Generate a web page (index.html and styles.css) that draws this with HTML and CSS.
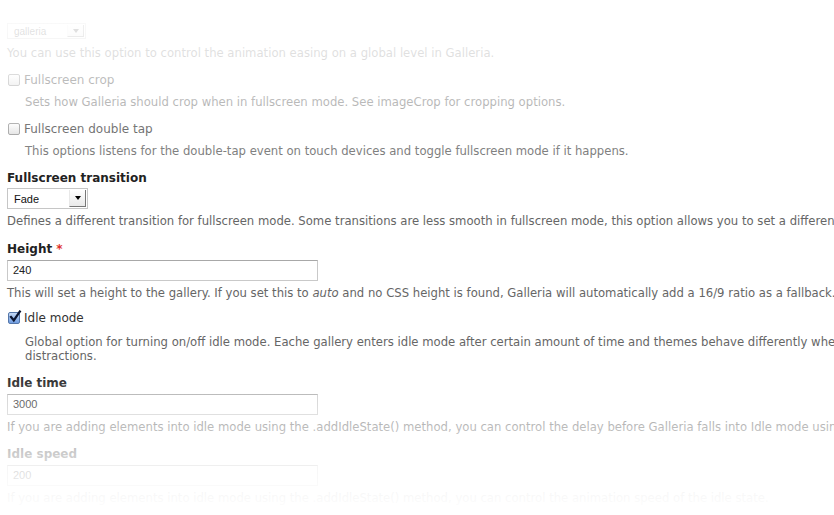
FILE: index.html
```html
<!DOCTYPE html>
<html>
<head>
<meta charset="utf-8">
<link rel="stylesheet" href="styles.css">
</head>
<body>
<div class="form">
  <div class="item item-top">
    <div class="select select-small"><span class="select-text">galleria</span><span class="select-btn"><span class="arrow"></span></span></div>
    <div class="desc desc-first">You can use this option to control the animation easing on a global level in Galleria.</div>
  </div>

  <div class="item">
    <label class="check"><span class="box"></span>Fullscreen crop</label>
    <div class="desc indent">Sets how Galleria should crop when in fullscreen mode. See imageCrop for cropping options.</div>
  </div>

  <div class="item">
    <label class="check"><span class="box"></span>Fullscreen double tap</label>
    <div class="desc indent">This options listens for the double-tap event on touch devices and toggle fullscreen mode if it happens.</div>
  </div>

  <div class="item item-transition">
    <div class="label">Fullscreen transition</div>
    <div class="select select-fade"><span class="select-text">Fade</span><span class="select-btn"><span class="arrow"></span></span></div>
    <div class="desc">Defines a different transition for fullscreen mode. Some transitions are less smooth in fullscreen mode, this option allows you to set a different transition when in fullscreen mode.</div>
  </div>

  <div class="item">
    <div class="label">Height <span class="req">*</span></div>
    <div class="input">240</div>
    <div class="desc">This will set a height to the gallery. If you set this to <em>auto</em> and no CSS height is found, Galleria will automatically add a 16/9 ratio as a fallback.</div>
  </div>

  <div class="item item-idle">
    <label class="check"><span class="box checked"><svg width="14" height="14" viewBox="0 0 14 14"><path d="M3 7 L5.8 10.4 L11.8 1.6" fill="none" stroke="#0b1530" stroke-width="2.3" stroke-linecap="square"/></svg></span>Idle mode</label>
    <div class="desc indent indent-idle">Global option for turning on/off idle mode. Eache gallery enters idle mode after certain amount of time and themes behave differently when this happens, f.ex clears the stage from<br>distractions.</div>
  </div>

  <div class="item">
    <div class="label">Idle time</div>
    <div class="input">3000</div>
    <div class="desc">If you are adding elements into idle mode using the .addIdleState() method, you can control the delay before Galleria falls into Idle mode using this option.</div>
  </div>

  <div class="item">
    <div class="label">Idle speed</div>
    <div class="input">200</div>
    <div class="desc">If you are adding elements into idle mode using the .addIdleState() method, you can control the animation speed of the idle state.</div>
  </div>
</div>
<div class="fade"></div>
</body>
</html>
```

FILE: styles.css
```css
html, body {
  margin: 0;
  padding: 0;
  background: #fff;
  overflow: hidden;
}
body {
  width: 834px;
  height: 515px;
  font-family: "DejaVu Sans", Verdana, sans-serif;
  color: #333;
  position: relative;
}
.form {
  padding: 23px 0 0 7px;
  white-space: nowrap;
}
.item {
  margin-bottom: 11px;
}
.item-transition { margin-bottom: 12px; }
.label {
  font-weight: bold;
  font-size: 12px;
  line-height: 18px;
  color: #222;
}
.req { color: #e0302a; }
.check {
  display: flex;
  align-items: center;
  font-size: 12px;
  line-height: 18px;
  color: #333;
}
.box {
  width: 12px;
  height: 12px;
  margin: 0 4px 0 1px;
  border: 1px solid #8a8a8a;
  border-radius: 2px;
  background: linear-gradient(#fcfcfc, #dcdcdc);
  box-sizing: border-box;
  position: relative;
}
.box.checked {
  border-color: #5577aa;
  background: linear-gradient(#c4d9f5, #6f9ce0);
}
.box svg {
  position: absolute;
  left: -1px;
  top: -3px;
}
.desc {
  font-size: 11.65px;
  line-height: 14px;
  color: #666;
  margin-top: 5px;
}
.desc-first { margin-top: 7px; }
.indent {
  padding-left: 18px;
  margin-top: 6px;
}
.item-idle { margin-top: -2px; }
.indent-idle { margin-top: 8px; }
.select {
  margin-top: 2px;
  width: 81px;
  height: 21px;
  box-sizing: border-box;
  border: 1px solid #c6c6c6;
  background: #fff;
  display: flex;
  font-family: "Liberation Sans", Arial, sans-serif;
  font-size: 11px;
  color: #111;
}
.select-fade { margin-top: 1px; }
.select-small {
  margin-top: 0;
  width: 79px;
  height: 16px;
  font-size: 10px;
}
.select-text {
  flex: 1;
  padding-left: 6px;
  display: flex;
  align-items: center;
}
.select-btn {
  width: 15px;
  margin: 1px 1px 1px 0;
  border-left: 1px solid #e8e8e8;
  border-right: 1px solid #777;
  border-bottom: 1px solid #777;
  background: linear-gradient(#ffffff, #e9e9e9);
  display: flex;
  align-items: center;
  justify-content: center;
}
.arrow {
  width: 0;
  height: 0;
  border-left: 3.5px solid transparent;
  border-right: 3.5px solid transparent;
  border-top: 4px solid #000;
}
.input {
  margin-top: 2px;
  width: 311px;
  height: 21px;
  box-sizing: border-box;
  border: 1px solid #c9c9c9;
  border-top-color: #a8a8a8;
  padding: 0 5px;
  font-family: "Liberation Sans", Arial, sans-serif;
  font-size: 11px;
  line-height: 19px;
  color: #222;
}
.fade {
  position: absolute;
  inset: 0;
  pointer-events: none;
  background: linear-gradient(to bottom,
    rgba(255,255,255,0.92) 0px,
    rgba(255,255,255,0.88) 30px,
    rgba(255,255,255,0.8) 53px,
    rgba(255,255,255,0.68) 79px,
    rgba(255,255,255,0.56) 101px,
    rgba(255,255,255,0.32) 128px,
    rgba(255,255,255,0.18) 150px,
    rgba(255,255,255,0) 175px,
    rgba(255,255,255,0) 365px,
    rgba(255,255,255,0.1) 382px,
    rgba(255,255,255,0.55) 426px,
    rgba(255,255,255,0.76) 452px,
    rgba(255,255,255,0.95) 494px,
    rgba(255,255,255,1) 515px);
}
```
